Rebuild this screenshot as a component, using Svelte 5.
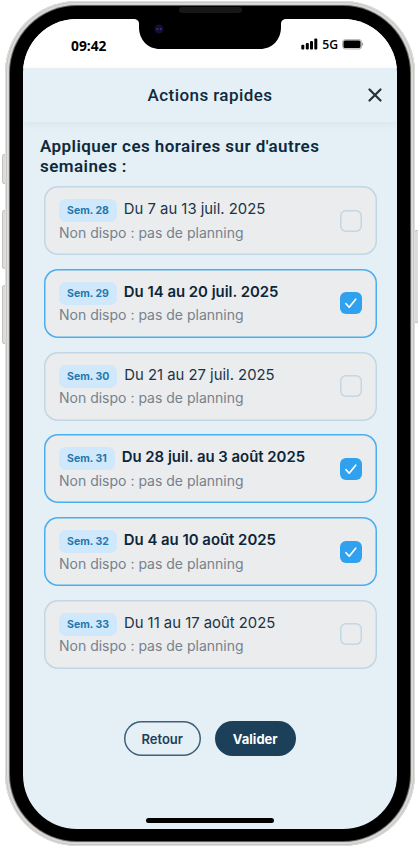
<script>
  let weeks = $state([
    { num: 28, label: 'Du 7 au 13 juil. 2025', checked: false },
    { num: 29, label: 'Du 14 au 20 juil. 2025', checked: true },
    { num: 30, label: 'Du 21 au 27 juil. 2025', checked: false },
    { num: 31, label: 'Du 28 juil. au 3 août 2025', checked: true },
    { num: 32, label: 'Du 4 au 10 août 2025', checked: true },
    { num: 33, label: 'Du 11 au 17 août 2025', checked: false }
  ])

  function toggle(week) {
    week.checked = !week.checked
  }
</script>

<div class="stage">
  <i class="side mute"></i>
  <i class="side vol-up"></i>
  <i class="side vol-down"></i>
  <i class="side power"></i>

  <div class="phone">
    <div class="bezel">
      <div class="screen">
        <div class="statusbar">
          <span class="time">09:42</span>
          <span class="network">
            <svg class="signal" width="17" height="12" viewBox="0 0 17 12">
              <rect x="0.3" y="6.8" width="3" height="4.7" rx="1" />
              <rect x="4.8" y="5" width="3" height="6.5" rx="1" />
              <rect x="9" y="3" width="3" height="8.5" rx="1" />
              <rect x="13.3" y="0.5" width="3" height="11" rx="1" />
            </svg>
            <span class="net">5G</span>
            <svg width="22" height="11" viewBox="0 0 22 11">
              <rect x="0.6" y="0.6" width="19" height="9.4" rx="2.6" fill="#ddd" stroke="#b5b5b5" />
              <rect x="1.5" y="1.5" width="17" height="7.6" rx="1.6" />
              <path d="M20.3 3.6c1.3.5 1.3 2.9 0 3.4z" fill="#777" />
            </svg>
          </span>
        </div>

        <header>
          <h1>Actions rapides</h1>
          <button class="close" aria-label="Fermer">
            <svg width="14" height="14" viewBox="0 0 14 14">
              <path d="M1.5 1.5l11 11M12.5 1.5l-11 11" />
            </svg>
          </button>
        </header>

        <main>
          <h2>Appliquer ces horaires sur d'autres<br>semaines :</h2>

          <div class="list">
            {#each weeks as week (week.num)}
              <button class="card" class:checked={week.checked} onclick={() => toggle(week)}>
                <span class="infos">
                  <span class="line">
                    <span class="badge">Sem. {week.num}</span>
                    <span class="label">{week.label}</span>
                  </span>
                  <span class="status">Non dispo : pas de planning</span>
                </span>
                <span class="box">
                  {#if week.checked}
                    <svg width="22" height="22" viewBox="0 0 22 22">
                      <path d="M6 11.7l3.2 3.5 6.5-8" />
                    </svg>
                  {/if}
                </span>
              </button>
            {/each}
          </div>

          <div class="actions">
            <button class="btn">Retour</button>
            <button class="btn primary">Valider</button>
          </div>
        </main>

        <div class="home"></div>
      </div>
    </div>
  </div>

  <div class="notch">
    <svg width="154" height="33" viewBox="0 0 154 33">
      <path d="M0 0H154V3C150 3 148 4.5 148 8V11C148 24 139 33 127 33H27C15 33 6 24 6 11V8C6 4.5 4 3 0 3Z" />
      <circle cx="26" cy="13" r="4.5" fill="#101030" />
      <circle cx="24.4" cy="13" r="1" fill="#34349a" />
      <circle cx="27.6" cy="13" r="1" fill="#34349a" />
    </svg>
  </div>
  <div class="speaker"></div>
</div>

<style>
:global(body) {
  background: #fff;
}
* {
  box-sizing: border-box;
}
button {
  font: inherit;
  cursor: pointer;
}
.stage {
  position: relative;
  width: 418px;
  height: 847px;
  padding: 1px 3px 1px 5px;
  overflow: hidden;
}
.phone {
  position: relative;
  height: 845px;
  padding: 5px;
  border-radius: 72px;
  background: #d3d2cf;
  box-shadow: inset 0 0 0 1px #dededc, inset 0 0 0 2px #c7c6c4, inset 0 0 0 4px #dfdedb;
}
.bezel {
  height: 835px;
  padding: 13px;
  border-radius: 67px;
  background: #000;
  box-shadow: 0 0 1px 1px #555;
}
.side {
  position: absolute;
  width: 5px;
  border: 1px solid #c4c3c1;
  border-radius: 2px;
  background: #dcdbd9;
}
.mute {
  left: 2px;
  top: 154px;
  height: 30px;
}
.vol-up {
  left: 2px;
  top: 210px;
  height: 59px;
}
.vol-down {
  left: 2px;
  top: 285px;
  height: 59px;
}
.power {
  left: 414px;
  top: 230px;
  height: 93px;
}
.notch {
  position: absolute;
  left: 133px;
  top: 16px;
  height: 33px;
}
.notch svg {
  display: block;
}
.speaker {
  position: absolute;
  left: 179px;
  top: 7px;
  width: 63px;
  height: 6px;
  border-radius: 3px;
  background: #171717;
}
.screen {
  display: flex;
  flex-direction: column;
  height: 810px;
  border-radius: 54px;
  overflow: hidden;
  background: #e4eff6;
  font-family: Inter, sans-serif;
  color: #0f2a3d;
}
.statusbar {
  display: flex;
  justify-content: space-between;
  flex: none;
  height: 49px;
  padding: 17px 33px 0 48px;
  background: #fff;
  color: #000;
  font-family: 'Open Sans', sans-serif;
}
.time {
  font-size: 13.8px;
  font-weight: 700;
  line-height: 20px;
}
.network {
  display: flex;
  align-items: center;
  height: 16px;
}
.signal {
  margin-top: -1px;
}
.net {
  margin: 1px 4px 0 4px;
  font-size: 12.2px;
  font-weight: 600;
  line-height: 16px;
}
header {
  display: flex;
  align-items: center;
  flex: none;
  height: 54px;
  padding: 0 15px 0 29px;
  box-shadow: 0 2px 8px rgba(20, 50, 70, .05);
}
h1 {
  flex: 1;
  margin: -1px 0 0;
  text-align: center;
  font-family: Roboto, sans-serif;
  font-size: 17px;
  font-weight: 500;
  letter-spacing: .43px;
}
.close {
  display: flex;
  padding: 0;
  border: 0;
  background: none;
}
.close path {
  fill: none;
  stroke: #26313a;
  stroke-width: 2.2;
  stroke-linecap: round;
}
main {
  flex: 1;
  padding: 14px 20.5px 0 17px;
}
h2 {
  margin: 0;
  font-family: Roboto, sans-serif;
  font-size: 17px;
  font-weight: 600;
  line-height: 20px;
  letter-spacing: .44px;
}
.list {
  display: grid;
  gap: 13.8px;
  padding: 10px 0 0 4px;
}
.card {
  display: flex;
  align-items: center;
  justify-content: space-between;
  width: 100%;
  height: 69px;
  padding: 0 15px;
  border: 0;
  border-radius: 14px;
  background: #ebecee;
  box-shadow: inset 0 0 0 1.5px #c2d6e3;
  color: #1a3448;
  text-align: left;
}
.card.checked {
  box-shadow: inset 0 0 0 1.5px #4aaeee;
  color: #0b2638;
}
.infos,
.line {
  display: flex;
}
.infos {
  flex-direction: column;
}
.line {
  align-items: center;
  gap: 7px;
  height: 24px;
}
.badge {
  height: 23px;
  padding: 0 8px;
  border-radius: 7px;
  background: #cfe8fb;
  color: #2478ad;
  font-size: 10.5px;
  font-weight: 700;
  line-height: 23px;
}
.label {
  font-size: 14.85px;
  line-height: 20px;
  margin-top: -3px;
}
.checked .label {
  font-size: 14.9px;
  font-weight: 600;
}
.status {
  color: #76828c;
  font-size: 14px;
  line-height: 20px;
}
.box {
  width: 22px;
  height: 22px;
  border-radius: 6px;
  box-shadow: inset 0 0 0 1.5px #c2d6e3;
}
.checked .box {
  background: #2fa1ee;
  box-shadow: none;
}
.box svg {
  display: block;
}
.box path {
  fill: none;
  stroke: #fff;
  stroke-width: 1.7;
  stroke-linecap: round;
  stroke-linejoin: round;
}
.actions {
  display: flex;
  justify-content: center;
  gap: 14px;
  padding: 52.5px 0 0 3px;
}
.btn {
  width: 77px;
  height: 35px;
  padding: 0;
  border: 0;
  border-radius: 18px;
  background: none;
  box-shadow: inset 0 0 0 1.5px #3d6179;
  color: #1c4059;
  font-size: 13px;
  font-weight: 600;
}
.btn.primary {
  width: 81px;
  background: #1c4059;
  box-shadow: none;
  color: #fff;
  font-weight: 700;
}
.home {
  align-self: center;
  flex: none;
  width: 128px;
  height: 5px;
  margin-bottom: 6px;
  border-radius: 3px;
  background: #000;
}
</style>
